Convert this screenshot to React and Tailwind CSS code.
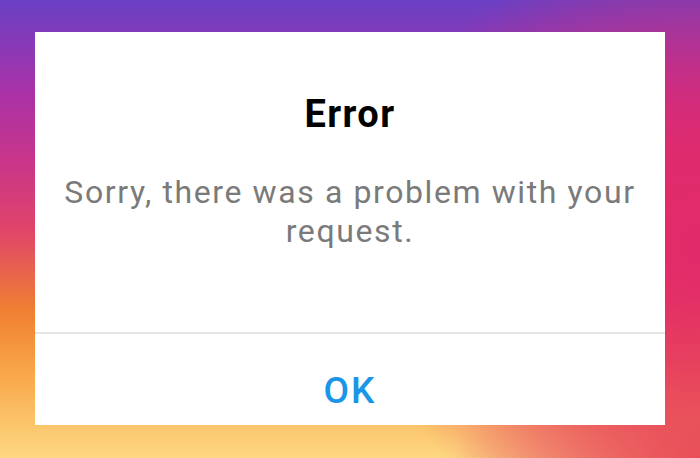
import React from "react";

const ErrorDialog = () => {
  return (
    <div className="w-full bg-white flex flex-col font-['Roboto',sans-serif]">
      <div className="h-[300px] flex flex-col items-center pt-[60px] px-4">
        <h2 className="text-[38px] leading-[45px] font-bold tracking-[1.4px] text-black">Error</h2>
        <p className="mt-[36px] text-[32px] leading-[39px] tracking-[1.6px] text-[#7a7a7a] text-center whitespace-nowrap">
          Sorry, there was a problem with your
          <br />
          request.
        </p>
      </div>
      <div className="border-t-2 border-[#e6e6e6] h-[93px] flex justify-center pt-[35px]">
        <button className="text-[37px] leading-[43px] font-medium tracking-[2px] text-[#1a95e8] h-[43px]">OK</button>
      </div>
    </div>
  );
};

export default function App() {
  return (
    <div className="w-full h-[458px] overflow-hidden px-[35px] pt-[32px] bg-[radial-gradient(ellipse_35%_35%_at_100%_100%,rgba(232,72,84,0.9)_0%,rgba(232,72,84,0)_100%),radial-gradient(ellipse_48%_70%_at_100%_55%,rgba(226,42,106,1)_0%,rgba(226,42,106,0.85)_35%,rgba(226,42,106,0)_100%),linear-gradient(to_bottom,#6a40c4_0%,#a932a8_20%,#c8358a_35%,#e0446a_50%,#f08032_68%,#f9a84a_82%,#fdd882_100%)]">
      <ErrorDialog />
    </div>
  );
}
